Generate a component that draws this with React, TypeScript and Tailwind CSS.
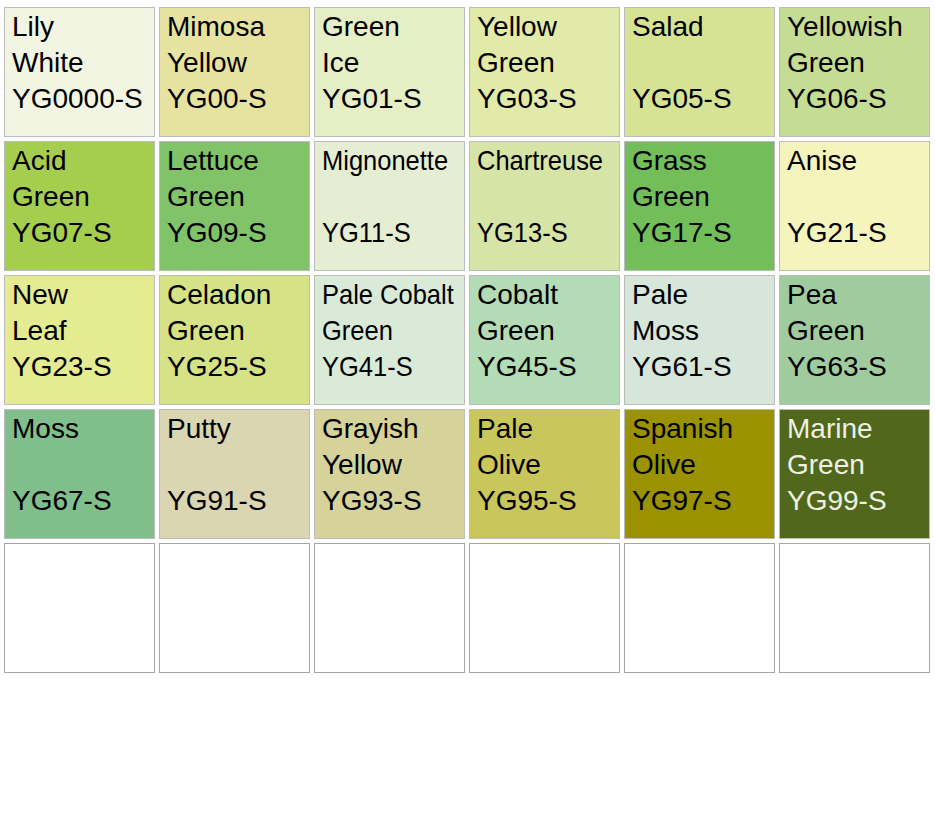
type Swatch = {
	name: [string, string];
	code: string;
	bg: string;
	narrow?: boolean;
	light?: boolean;
};

const swatches: Swatch[] = [
	{ name: ["Lily", "White"], code: "YG0000-S", bg: "bg-[#f2f5e2]" },
	{ name: ["Mimosa", "Yellow"], code: "YG00-S", bg: "bg-[#e6e3a0]" },
	{ name: ["Green", "Ice"], code: "YG01-S", bg: "bg-[#e5eec5]" },
	{ name: ["Yellow", "Green"], code: "YG03-S", bg: "bg-[#e1eaa8]" },
	{ name: ["Salad", ""], code: "YG05-S", bg: "bg-[#d7e394]" },
	{ name: ["Yellowish", "Green"], code: "YG06-S", bg: "bg-[#c5dc95]" },

	{ name: ["Acid", "Green"], code: "YG07-S", bg: "bg-[#a5ce4f]" },
	{ name: ["Lettuce", "Green"], code: "YG09-S", bg: "bg-[#80c369]" },
	{ name: ["Mignonette", ""], code: "YG11-S", bg: "bg-[#e5eed3]", narrow: true },
	{ name: ["Chartreuse", ""], code: "YG13-S", bg: "bg-[#d6e4a5]", narrow: true },
	{ name: ["Grass", "Green"], code: "YG17-S", bg: "bg-[#72bf5a]" },
	{ name: ["Anise", ""], code: "YG21-S", bg: "bg-[#f6f4bd]" },

	{ name: ["New", "Leaf"], code: "YG23-S", bg: "bg-[#e5eb91]" },
	{ name: ["Celadon", "Green"], code: "YG25-S", bg: "bg-[#d5e285]" },
	{ name: ["Pale Cobalt", "Green"], code: "YG41-S", bg: "bg-[#daead9]", narrow: true },
	{ name: ["Cobalt", "Green"], code: "YG45-S", bg: "bg-[#b3dbb6]" },
	{ name: ["Pale", "Moss"], code: "YG61-S", bg: "bg-[#d6e6da]" },
	{ name: ["Pea", "Green"], code: "YG63-S", bg: "bg-[#a0cb9f]" },

	{ name: ["Moss", ""], code: "YG67-S", bg: "bg-[#80be8b]" },
	{ name: ["Putty", ""], code: "YG91-S", bg: "bg-[#dad6b1]" },
	{ name: ["Grayish", "Yellow"], code: "YG93-S", bg: "bg-[#d5d39a]" },
	{ name: ["Pale", "Olive"], code: "YG95-S", bg: "bg-[#c9c65b]" },
	{ name: ["Spanish", "Olive"], code: "YG97-S", bg: "bg-[#9a9200]" },
	{ name: ["Marine", "Green"], code: "YG99-S", bg: "bg-[#51671b]", light: true },
];

function SwatchCell({ swatch }: { swatch: Swatch }) {
	return (
		<div
			className={`h-[130px] border border-[#bcbcbc] pl-[7px] pt-px text-[28px] leading-[36px] ${swatch.bg} ${
				swatch.light ? "text-[#eef1e2]" : "text-black"
			}`}
		>
			{/* condensed labels in the source chart */}
			<div className={swatch.narrow ? "origin-left scale-x-[0.91]" : ""}>
				<div className="h-[36px] whitespace-nowrap">{swatch.name[0]}</div>
				<div className="h-[36px] whitespace-nowrap">{swatch.name[1]}</div>
				<div className="h-[36px] whitespace-nowrap">{swatch.code}</div>
			</div>
		</div>
	);
}

export default function App() {
	return (
		<div className="h-[818px] w-[935px] bg-white pl-[4px] pt-[7px] font-['Liberation_Sans',Arial,sans-serif]">
			<div className="grid grid-cols-[repeat(6,151px)] gap-[4px]">
				{swatches.map((s) => (
					<SwatchCell key={s.code} swatch={s} />
				))}
				{Array.from({ length: 6 }).map((_, i) => (
					<div key={i} className="h-[130px] border border-[#a6a6a6] bg-white" />
				))}
			</div>
		</div>
	);
}
